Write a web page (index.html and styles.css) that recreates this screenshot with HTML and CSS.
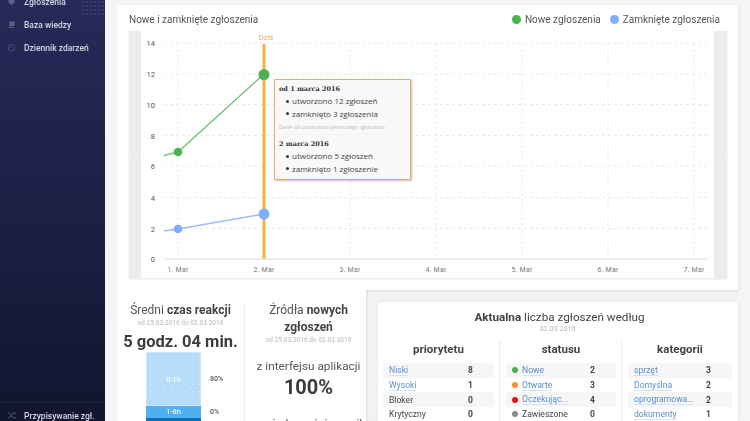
FILE: index.html
```html
<!DOCTYPE html>
<html lang="pl">
<head>
<meta charset="utf-8">
<title>Zgłoszenia</title>
<link rel="stylesheet" href="styles.css">
</head>
<body>
<div class="app">
  <aside class="sidebar">
    <nav class="nav">
      <a class="nav-item">
        <svg class="nav-icon" viewBox="0 0 12 12"><path d="M2 1h8v6L6 11 2 7z" fill="currentColor"/></svg>
        <span>Zgłoszenia</span>
      </a>
      <a class="nav-item">
        <svg class="nav-icon" viewBox="0 0 12 12"><path d="M3 2h7v6H3zM2 9h7v1.500H2z" fill="currentColor"/></svg>
        <span>Baza wiedzy</span>
      </a>
      <a class="nav-item">
        <svg class="nav-icon" viewBox="0 0 12 12"><circle cx="6" cy="6" r="4.500" fill="none" stroke="currentColor"/><path d="M6 3.500V6H4" fill="none" stroke="currentColor" stroke-width=".8"/></svg>
        <span>Dziennik zdarzeń</span>
      </a>
    </nav>
    <div class="sidebar-foot">
      <a class="nav-item">
        <svg class="nav-icon" viewBox="0 0 12 12"><path d="M1 3h2.500l4 6H11M1 9h2.500l4-6H11M9.500 1.500 11 3 9.500 4.500M9.500 7.500 11 9 9.500 10.500" fill="none" stroke="currentColor"/></svg>
        <span>Przypisywanie zgł.</span>
      </a>
    </div>
  </aside>

  <main class="main">
    <section class="card-top">
      <header class="chart-head">
        <h2 class="chart-title">Nowe i zamknięte zgłoszenia</h2>
        <div class="legend">
          <span class="legend-item"><i class="dot dot-new"></i>Nowe zgłoszenia</span>
          <span class="legend-item"><i class="dot dot-closed"></i>Zamknięte zgłoszenia</span>
        </div>
      </header>
      <div class="chart">
        <svg class="chart-svg" viewBox="0 0 598 247" width="598" height="247">
          <rect x="0" y="0" width="598" height="247" fill="#fff"/>
          <rect x="0" y="0" width="12" height="247" fill="#ececec"/>
          <rect x="585" y="0" width="13" height="247" fill="#ececec"/>
          <g class="grid">
            <path d="M35 12H579M35 43H579M35 73.500H579M35 104.500H579M35 135H579M35 166.500H579M35 197.500H579"/>
            <path d="M49 12V228M135 12V228M221 12V228M307 12V228M393 12V228M479 12V228M565 12V228"/>
          </g>
          <path d="M35 228H579" class="axis"/>
          <g class="ylabels">
            <text x="26" y="15">14</text><text x="26" y="46">12</text><text x="26" y="76.500">10</text>
            <text x="26" y="107.500">8</text><text x="26" y="138">6</text><text x="26" y="169.500">4</text>
            <text x="26" y="200.500">2</text><text x="26" y="231">0</text>
          </g>
          <g class="xlabels">
            <text x="49" y="241">1. Mar</text><text x="135" y="241">2. Mar</text><text x="221" y="241">3. Mar</text>
            <text x="307" y="241">4. Mar</text><text x="393" y="241">5. Mar</text><text x="479" y="241">6. Mar</text><text x="565" y="241">7. Mar</text>
          </g>
          <text x="137" y="9" class="today">Dziś</text>
          <path d="M135 13V228" class="today-line"/>
          <path d="M35 124.500 49 121 135 43" class="line-new"/>
          <path d="M35 200 49 198 135 183" class="line-closed"/>
          <circle cx="49" cy="121" r="4.300" fill="#4caf50"/>
          <circle cx="135" cy="43.500" r="5.500" fill="#4caf50"/>
          <circle cx="49" cy="198" r="4.300" fill="#82aeff"/>
          <circle cx="135" cy="183" r="5.500" fill="#82aeff"/>
          <text x="7" y="126" class="arrow">‹</text>
          <text x="591" y="126" class="arrow">›</text>
        </svg>
        <div class="tooltip">
          <p class="tip-date">od 1 marca 2016</p>
          <ul class="tip-list"><li>utworzono 12 zgłoszeń</li><li>zamknięto 3 zgłoszenia</li></ul>
          <p class="tip-note">Dane od utworzenia pierwszego zgłoszenia</p>
          <p class="tip-date">2 marca 2016</p>
          <ul class="tip-list"><li>utworzono 5 zgłoszeń</li><li>zamknięto 1 zgłoszenie</li></ul>
        </div>
      </div>
    </section>

    <div class="bottom">
      <section class="stats">
        <div class="stat stat-time">
          <h3 class="stat-title">Średni <b>czas reakcji</b></h3>
          <p class="range">od 25.02.2016 do 02.03.2016</p>
          <p class="big-time">5 godz. 04 min.</p>
          <div class="stack">
            <div class="stack-row"><div class="seg seg-a">0-1h</div><span class="pct">80%</span></div>
            <div class="stack-row"><div class="seg seg-b">1-8h</div><span class="pct">0%</span></div>
            <div class="stack-row"><div class="seg seg-c"></div></div>
          </div>
        </div>
        <div class="stat stat-src">
          <h3 class="stat-title">Źródła <b>nowych zgłoszeń</b></h3>
          <p class="range range-src">od 25.02.2016 do 02.03.2016</p>
          <p class="src-name">z interfejsu aplikacji</p>
          <p class="src-val">100%</p>
          <p class="src-name src-next">z wiadomości e-mail</p>
        </div>
      </section>

      <section class="current-wrap">
        <div class="current">
          <h3 class="current-title"><b>Aktualna</b> liczba zgłoszeń według</h3>
          <p class="range range-current">02.03.2016</p>
          <div class="cols">
            <div class="col col-a">
              <h4 class="col-title">priorytetu</h4>
              <div class="row"><a class="lnk">Niski</a><b>8</b></div>
              <div class="row"><a class="lnk">Wysoki</a><b>1</b></div>
              <div class="row"><span>Bloker</span><b>0</b></div>
              <div class="row"><span>Krytyczny</span><b>0</b></div>
            </div>
            <div class="col col-b">
              <h4 class="col-title">statusu</h4>
              <div class="row"><span class="st"><i class="sd sd-green"></i><a class="lnk">Nowe</a></span><b>2</b></div>
              <div class="row"><span class="st"><i class="sd sd-orange"></i><a class="lnk">Otwarte</a></span><b>3</b></div>
              <div class="row"><span class="st"><i class="sd sd-red"></i><a class="lnk">Oczekując...</a></span><b>4</b></div>
              <div class="row"><span class="st"><i class="sd sd-grey"></i><span>Zawieszone</span></span><b>0</b></div>
            </div>
            <div class="col col-c">
              <h4 class="col-title">kategorii</h4>
              <div class="row"><a class="lnk">sprzęt</a><b>3</b></div>
              <div class="row"><a class="lnk">Domyślna</a><b>2</b></div>
              <div class="row"><a class="lnk">oprogramowa...</a><b>2</b></div>
              <div class="row"><a class="lnk">dokumenty</a><b>1</b></div>
            </div>
          </div>
        </div>
      </section>
    </div>
  </main>
</div>
</body>
</html>
```
FILE: styles.css
```css
* { box-sizing: border-box; }
html, body { margin: 0; height: 421px; overflow: hidden; }
body { font-family: Roboto, "Liberation Sans", sans-serif; color: #444; background: #f5f5f5; }
p, h2, h3, h4, ul { margin: 0; padding: 0; }
b { font-weight: 700; }

.app { display: flex; width: 750px; height: 421px; overflow: hidden; filter: blur(.45px); }

.sidebar {
  position: relative; width: 105px; height: 421px; flex: none;
  display: flex; flex-direction: column; justify-content: space-between;
  background: linear-gradient(#262a58 0%, #1d2147 45%, #11152f 100%);
  color: #d5d7e6;
}
.sidebar::before {
  content: ""; position: absolute; right: 0; top: 0; width: 24px; height: 16px;
  background-image: radial-gradient(circle, rgba(255,255,255,.14) .6px, transparent .9px);
  background-size: 4px 4px;
}
.nav { margin-top: -10px; }
.nav-item { display: flex; align-items: center; gap: 8px; height: 23px; padding-left: 7px; font-size: 8.500px; font-weight: 500; white-space: nowrap; }
.nav-icon { width: 9px; height: 9px; flex: none; color: #5b5f80; }
.sidebar-foot { border-top: 1px solid #1e2240; height: 19px; padding-top: 1px; }

.main { width: 645px; height: 421px; padding: 5px 12px 0; display: flex; flex-direction: column; overflow: hidden; }

.card-top { background: #fff; height: 285px; width: 621px; padding: 0 12px; flex: none; box-shadow: 1px 0 2px #e4e4e4; }
.chart-head { display: flex; justify-content: space-between; align-items: center; height: 26px; padding-top: 3px; }
.chart-title { font-size: 10px; font-weight: 400; color: #555; }
.legend { display: flex; gap: 9px; font-size: 10px; color: #555; margin-right: 6px; }
.legend-item { display: flex; align-items: center; gap: 4px; }
.dot { width: 9px; height: 9px; border-radius: 50%; }
.dot-new { background: #4caf50; }
.dot-closed { background: #82aeff; }

.chart { position: relative; width: 598px; height: 247px; border-top: 1px solid #e3e3e3; box-shadow: 0 1px 2px #e2e2e2; }
.chart-svg { display: block; margin-top: -1px; font-family: Roboto, "Liberation Sans", sans-serif; }
.grid path { stroke: #ebebeb; stroke-width: 1; stroke-dasharray: 3 3; fill: none; }
.axis { stroke: #d8e2f2; fill: none; }
.ylabels text { font-size: 7.500px; fill: #555; text-anchor: end; }
.xlabels text { font-size: 7px; fill: #777; text-anchor: middle; letter-spacing: .2px; }
.today { font-size: 7.500px; fill: #f6a94a; text-anchor: middle; }
.today-line { stroke: #f9ae3e; stroke-width: 3; fill: none; }
.line-new { stroke: #7cc47f; stroke-width: 1.500; fill: none; }
.line-closed { stroke: #9cbdfb; stroke-width: 1.500; fill: none; }
.arrow { font-size: 9px; fill: #fff; text-anchor: middle; }

.tooltip {
  position: absolute; left: 145px; top: 47px; width: 137px; height: 101px;
  padding: 3px 4px 0;
  background: #f9f9f9; border: 1px solid #eda865; border-radius: 1px;
  box-shadow: 1px 1px 2px rgba(0,0,0,.25);
  font-family: "Open Sans", "Liberation Sans", sans-serif; font-size: 8px; color: #444;
}
.tip-date { font-family: "DejaVu Serif", serif; font-weight: 700; font-size: 6.500px; color: #333; line-height: 12px; }
.tip-list { list-style: none; padding-left: 7px; }
.tip-list li { display: flex; align-items: center; gap: 3px; line-height: 12.500px; white-space: nowrap; }
.tip-list li::before { content: ""; width: 3px; height: 3px; border-radius: 50%; background: #333; flex: none; }
.tip-note { font-size: 5.300px; color: #bbb; line-height: 14px; margin-bottom: 3px; border-bottom: 1px solid #f3f3f3; white-space: nowrap; }

.bottom { display: flex; flex: 1; min-height: 0; }
.stats { width: 249px; flex: none; display: flex; background: #fff; padding-top: 12px; }
.stat { text-align: center; }
.stat-time { width: 127px; padding-right: 1px; padding-left: 1px; }
.stat-src { width: 122px; border-left: 1px solid #efefef; padding: 0 1px 0 7px; }
.stat-title { font-size: 12px; font-weight: 400; line-height: 17px; color: #555; }
.stat-title b { color: #444; font-weight: 700; }
.range { font-size: 6.500px; font-weight: 500; color: #c4c4c4; line-height: 9px; }
.big-time { font-size: 16.500px; font-weight: 700; color: #3c3c3c; line-height: 20px; margin-top: 4px; white-space: nowrap; }
.stack { margin: 0 0 0 28px; }
.stack-row { display: flex; align-items: center; gap: 9px; }
.seg { width: 55px; color: #fff; font-size: 7.500px; text-align: center; }
.pct { font-size: 7px; font-weight: 500; color: #555; }
.seg-a {
  height: 54px; line-height: 54px; border: 1px dotted #e4f2fd;
  background-color: #b5dcf9;
  background-image: radial-gradient(circle, rgba(255,255,255,.55) .5px, transparent .8px);
  background-size: 7px 7px;
}
.seg-b { height: 12px; line-height: 12px; background: #50b0ef; }
.seg-c { height: 3px; background: #0b6db3; }
.src-name { font-size: 11.800px; line-height: 14px; margin-top: 14px; color: #555; white-space: nowrap; }
.src-val { font-size: 20px; font-weight: 700; line-height: 24px; margin-top: 2px; color: #3c3c3c; }
.src-next { margin-top: 17px; }

.current-wrap { flex: 1; background: #f2f2f2; box-shadow: inset 1px 1px 2px #dcdcdc; padding: 12px 0 0 12px; }
.current { background: #fff; height: 119px; width: 360px; padding: 0 6px 0 5px; text-align: center; box-shadow: 1px 0 2px #e4e4e4; }
.current-title { font-size: 11.700px; font-weight: 400; line-height: 28px; color: #444; padding: 1px 0 0 4px; height: 21px; }
.current-title b { font-weight: 700; }
.range-current { line-height: 10px; font-size: 7px; margin-top: 1px; }
.cols { display: grid; grid-template-columns: 116px 122px 111px; margin-top: 6px; }
.col { padding: 0 5px 0 0; border-left: 1px solid #eee; height: 81px; }
.col-a { border-left: 0; }
.col-b { padding-left: 6px; }
.col-c { padding: 0 0 0 6px; }
.col-title { font-size: 11.500px; font-weight: 700; line-height: 18px; color: #444; margin-bottom: 5px; }
.row { display: flex; justify-content: space-between; align-items: center; height: 14.700px; padding: 0 21px 0 6px; font-size: 8.600px; text-align: left; color: #444; white-space: nowrap; }
.col-title + .row, .col-title + .row + .row + .row { background: #f6f6f6; }
.row b { font-size: 8.500px; font-weight: 700; }
.lnk { color: #5a8ecb; border-bottom: 1px solid #d5e3f3; line-height: 10px; }
.st { display: flex; align-items: center; gap: 4px; }
.sd { width: 6px; height: 6px; border-radius: 50%; }
.sd-green { background: #4caf50; }
.sd-orange { background: #f9922b; }
.sd-red { background: #ee1111; }
.sd-grey { background: #8a8a8a; }
```
